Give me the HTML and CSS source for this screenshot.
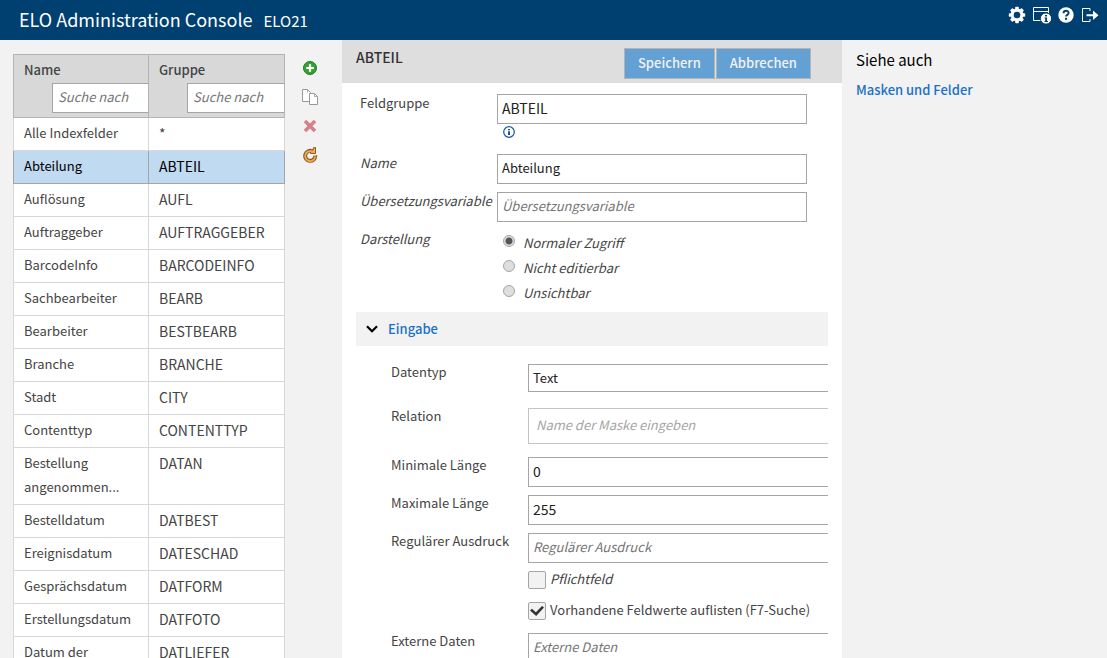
FILE: index.html
```html
<!DOCTYPE html>
<html lang="de">
<head>
<meta charset="utf-8">
<title>ELO Administration Console</title>
<link rel="stylesheet" href="styles.css">
</head>
<body>
<header class="topbar">
  <h1 class="brand">ELO Administration Console</h1>
  <span class="repo">ELO21</span>
  <nav class="top-actions">
    <button class="icon-btn" type="button" aria-label="Einstellungen">
      <svg width="18" height="18" viewBox="0 0 18 18"><g fill="#fff"><g id="t"><rect x="7.2" y="0.8" width="3.6" height="16.4" rx="0.8"/><rect x="0.8" y="7.2" width="16.4" height="3.6" rx="0.8"/></g><use href="#t" transform="rotate(45 9 9)"/><circle cx="9" cy="9" r="6.4"/></g><circle cx="9" cy="9" r="3.3" fill="#004071"/></svg>
    </button>
    <button class="icon-btn" type="button" aria-label="Informationen">
      <svg width="18" height="18" viewBox="0 0 18 18"><path d="M.5 1.500h15v13H.5zM.5 5.500h15" fill="none" stroke="#fff"/><circle cx="13" cy="12.500" r="5.600" fill="#fff" stroke="#004071"/><path d="M12 9h2v1.500h-2zM11.500 11.500H14v3.500h1v1h-3.500v-1h.7v-2.500h-.7z" fill="#004071"/></svg>
    </button>
    <button class="icon-btn" type="button" aria-label="Hilfe">
      <svg width="16" height="18" viewBox="0 0 16 18"><circle cx="8" cy="9" r="7.700" fill="#fff"/><path d="M5.500 7.200C5.500 4 10.600 4 10.600 7c0 2-2.600 1.800-2.600 3.600" fill="none" stroke="#004071" stroke-width="1.900"/><rect x="7" y="11.800" width="2" height="2" fill="#004071"/></svg>
    </button>
    <button class="icon-btn" type="button" aria-label="Abmelden">
      <svg width="18" height="18" viewBox="0 0 18 18"><path d="M9 5V2.500H1.500v13H9V13" fill="none" stroke="#fff"/><path d="M5.500 8.200H12V4.500L17.500 9.200 12 14v-3.700H5.500z" fill="#fff"/></svg>
    </button>
  </nav>
</header>

<div class="workspace">
  <section class="list">
    <table class="fields">
      <thead>
        <tr>
          <th><label for="sn">Name</label><span class="filter"><input id="sn" type="text" placeholder="Suche nach"></span></th>
          <th><label for="sg">Gruppe</label><span class="filter"><input id="sg" type="text" placeholder="Suche nach"></span></th>
        </tr>
      </thead>
      <tbody>
        <tr><td>Alle Indexfelder</td><td>*</td></tr>
        <tr class="selected"><td>Abteilung</td><td>ABTEIL</td></tr>
        <tr><td>Auflösung</td><td>AUFL</td></tr>
        <tr><td>Auftraggeber</td><td>AUFTRAGGEBER</td></tr>
        <tr><td>BarcodeInfo</td><td>BARCODEINFO</td></tr>
        <tr><td>Sachbearbeiter</td><td>BEARB</td></tr>
        <tr><td>Bearbeiter</td><td>BESTBEARB</td></tr>
        <tr><td>Branche</td><td>BRANCHE</td></tr>
        <tr><td>Stadt</td><td>CITY</td></tr>
        <tr><td>Contenttyp</td><td>CONTENTTYP</td></tr>
        <tr><td>Bestellung angenommen...</td><td>DATAN</td></tr>
        <tr><td>Bestelldatum</td><td>DATBEST</td></tr>
        <tr><td>Ereignisdatum</td><td>DATESCHAD</td></tr>
        <tr><td>Gesprächsdatum</td><td>DATFORM</td></tr>
        <tr><td>Erstellungsdatum</td><td>DATFOTO</td></tr>
        <tr><td>Datum der</td><td>DATLIEFER</td></tr>
      </tbody>
    </table>
  </section>

  <div class="tools">
    <button class="icon-btn" type="button" aria-label="Neu">
      <svg width="16" height="16" viewBox="0 0 16 16"><circle cx="8" cy="8" r="6.500" fill="#35a035" stroke="#1c7a22"/><path d="M8 4.200v7.600M4.200 8h7.600" stroke="#fff" stroke-width="2.200"/></svg>
    </button>
    <button class="icon-btn" type="button" aria-label="Kopieren">
      <svg width="16" height="16" viewBox="0 0 16 16"><path d="M.5.500h5l3 3v9h-8z" fill="#fff" stroke="#999"/><path d="M7.500 4.500h5l3 3v8h-8z" fill="#fff" stroke="#999"/><path d="M12.500 4.500v3h3M5.500.500v3" fill="none" stroke="#aaa"/></svg>
    </button>
    <button class="icon-btn" type="button" aria-label="Löschen">
      <svg width="16" height="16" viewBox="0 0 16 16"><path d="M3 3l10 10M13 3L3 13" stroke="#d68089" stroke-width="3.600"/></svg>
    </button>
    <button class="icon-btn" type="button" aria-label="Aktualisieren">
      <svg width="16" height="16" viewBox="0 0 16 16"><path d="M10.500 4.400A5 5 0 1 0 13.200 8.500" fill="none" stroke="#8d5a2a" stroke-width="4"/><path d="M8.500 6.500h5V.600h-2L11 3H8.500z" fill="#f0ab4c" stroke="#8d5a2a"/><path d="M10 4.400A5 5 0 1 0 13.200 9.300" fill="none" stroke="#f0ab4c" stroke-width="1.800"/></svg>
    </button>
  </div>

  <main class="panel">
    <div class="panel-head">
      <h2 class="panel-title">ABTEIL</h2>
      <div class="actions"><button class="btn" type="button">Speichern</button><button class="btn" type="button">Abbrechen</button></div>
    </div>
    <form class="form">
      <div class="row row-info">
        <label for="grp">Feldgruppe</label>
        <div class="control">
          <input id="grp" class="text code" type="text" value="ABTEIL">
          <svg class="info" width="12" height="12" viewBox="0 0 12 12"><circle cx="6" cy="6" r="5.300" fill="#fff" stroke="#1d5796" stroke-width="1.200"/><path d="M5 3h2v1.300H5zM5 5.200h2V9H5z" fill="#1d5796"/></svg>
        </div>
      </div>
      <div class="row tr"><label for="nm">Name</label><input id="nm" class="text" type="text" value="Abteilung"></div>
      <div class="row tr"><label for="uv">Übersetzungsvariable</label><input id="uv" class="text" type="text" placeholder="Übersetzungsvariable"></div>
      <div class="row tr" role="radiogroup" aria-labelledby="dl">
        <span class="caption" id="dl">Darstellung</span>
        <div class="radios">
          <label class="option"><input type="radio" name="d" checked><span>Normaler Zugriff</span></label>
          <label class="option"><input type="radio" name="d"><span>Nicht editierbar</span></label>
          <label class="option"><input type="radio" name="d"><span>Unsichtbar</span></label>
        </div>
      </div>
    </form>
    <section class="group">
      <button class="group-head" type="button">
        <svg width="12" height="8" viewBox="0 0 12 8"><path d="M1 1.200l5 5 5-5" fill="none" stroke="#000" stroke-width="2.200"/></svg>
        Eingabe
      </button>
      <div class="group-body">
        <div class="row row-type"><label for="dt">Datentyp</label><select id="dt" class="text select"><option>Text</option></select></div>
        <div class="row row-mask"><label for="rl">Relation</label><input id="rl" class="text mask" type="text" placeholder="Name der Maske eingeben"></div>
        <div class="row"><label for="mi">Minimale Länge</label><input id="mi" class="text code" type="text" value="0"></div>
        <div class="row"><label for="ma">Maximale Länge</label><input id="ma" class="text code" type="text" value="255"></div>
        <div class="row"><label for="ra">Regulärer Ausdruck</label><input id="ra" class="text" type="text" placeholder="Regulärer Ausdruck"></div>
        <label class="check tr"><input type="checkbox"><span>Pflichtfeld</span></label>
        <label class="check"><input type="checkbox" checked><span>Vorhandene Feldwerte auflisten (F7-Suche)</span></label>
        <div class="row"><label for="ed">Externe Daten</label><input id="ed" class="text" type="text" placeholder="Externe Daten"></div>
      </div>
    </section>
  </main>

  <aside class="aside">
    <h2 class="aside-title">Siehe auch</h2>
    <a class="link" href="#masken">Masken und Felder</a>
  </aside>
</div>
</body>
</html>
```
FILE: styles.css
```css
* { box-sizing: border-box; }
body {
  margin: 0;
  height: 100vh;
  display: flex;
  flex-direction: column;
  overflow: hidden;
  background: #f2f2f2;
  color: #444;
  font: 13px/24px "Noto Sans CJK SC", sans-serif;
}
button, input, select { font: inherit; color: inherit; margin: 0; }
h1, h2 { margin: 0; font-weight: 400; }
svg { display: block; }
.icon-btn { padding: 0; border: 0; background: none; cursor: pointer; }

.topbar {
  flex: none;
  display: flex;
  align-items: baseline;
  height: 40px;
  padding: 0 8px 0 19px;
  background: #004071;
  color: #fff;
  line-height: 38px;
}
.brand { font-size: 18px; }
.repo { margin-left: 11px; font-size: 15px; }
.top-actions { display: flex; gap: 7px; margin-left: auto; align-self: flex-start; padding-top: 6px; }

.workspace {
  flex: 1;
  min-height: 0;
  display: grid;
  grid-template-columns: 272px 57px minmax(0, 500fr) minmax(0, 265fr);
  padding-left: 13px;
}
.list { padding-top: 14px; min-height: 0; overflow: hidden; }
.fields { width: 100%; table-layout: fixed; border-spacing: 0; border-top: 1px solid #b4b4b4; }
.fields th, .fields td { text-align: left; vertical-align: top; border: 0 solid #d8d8d8; border-width: 0 1px 1px 0; }
.fields th:first-child, .fields td:first-child { border-left-width: 1px; }
.fields th { padding: 3px 0 4px; background: #d8d8d8; border-color: #b4b4b4; font-weight: 500; }
.fields th label { display: block; padding: 0 0 1px 10px; }
.fields td { padding: 3px 10px 5px; background: #fff; }
.fields td:last-child { font-size: 14px; }
.fields .selected td { background: #c0daf1; color: #000; border-color: #a5a5a5; }
.filter { display: block; margin-left: 38px; overflow: hidden; font-weight: 400; }
.filter input {
  display: block;
  width: 140px;
  height: 30px;
  padding: 0 5px 3px;
  border: 1px solid #a5a5a5;
  background: #fff;
}
::placeholder { color: #757575; font-style: italic; opacity: 1; }

.tools { display: flex; flex-direction: column; align-items: center; gap: 13px; padding: 20px 7px 0 0; }

.panel { min-height: 0; overflow: hidden; background: #fff; }
.panel-head {
  display: flex;
  justify-content: space-between;
  align-items: flex-start;
  height: 43px;
  padding: 8px 31px 0 14px;
  background: #dedede;
}
.panel-title { font-size: 14px; font-weight: 500; line-height: 18px; color: #333; }
.actions { display: flex; gap: 1px; }
.btn {
  height: 31px;
  padding: 0 13px 1px;
  border: 1px solid #b4b4b4;
  background: #63a0d4;
  color: #f2f2f2;
  font-weight: 500;
  line-height: 28px;
}
.form { padding: 11px 19px 7px 18px; }
.row { display: flex; align-items: flex-start; margin-bottom: 8px; }
.row > label, .caption { flex: none; width: 137px; line-height: 18px; white-space: nowrap; }
.tr > label, .caption, .tr span { font-style: italic; }
.text {
  flex: none;
  display: block;
  width: 310px;
  height: 30px;
  padding: 0 4px 3px;
  border: 1px solid #a5a5a5;
  border-radius: 0;
  background: #fff;
  color: #222;
}
.code { font-size: 14px; }
.row-info { margin-bottom: 16px; }
.info { margin: 2px 0 0 6px; }
.form .row:last-child { margin-bottom: 0; }
.radios { padding-left: 6px; }
.option { display: flex; gap: 8px; height: 25px; line-height: 25px; }
.option input {
  appearance: none;
  width: 12px;
  height: 12px;
  margin-top: 5px;
  border: 1px solid #a5a5a5;
  border-radius: 50%;
  background: #dedede;
}
.option input:checked { background: radial-gradient(circle, #555 0 3px, #dedede 4px); }

.group { margin: 0 14px; overflow: hidden; }
.group-head {
  display: flex;
  align-items: center;
  gap: 10px;
  width: 100%;
  height: 34px;
  padding: 0 10px;
  border: 0;
  background: #f2f2f2;
  color: #1a71c6;
  font-weight: 500;
  text-align: left;
}
.group-body { padding: 18px 0 0 35px; }
.group-body .row > label { line-height: 16px; }
.group-body .row-type { margin-bottom: 16px; }
.select { appearance: none; height: 28px; padding-bottom: 1px; }
.group-body .row-mask { margin-bottom: 13px; }
.mask { height: 36px; padding: 0 7px 3px; border-color: #c4c4c4; }
.mask::placeholder { color: #a5a5a5; }
.check { display: flex; align-items: center; gap: 4px; height: 18px; margin: 0 0 13px 137px; white-space: nowrap; }
.check span { padding-bottom: 2px; }
.check input {
  appearance: none;
  flex: none;
  display: grid;
  place-items: center;
  width: 18px;
  height: 18px;
  border: 1px solid #a5a5a5;
  border-radius: 2px;
  background: #f2f2f2;
}
.check input:checked::before {
  content: "";
  width: 14px;
  height: 10px;
  background: #333;
  clip-path: polygon(0 45%, 14% 28%, 42% 62%, 86% 0, 100% 16%, 44% 100%);
}

.aside { padding: 8px 14px; color: #000; }
.aside-title { font-size: 15px; line-height: 24px; margin-bottom: 6px; }
.link { color: #1a71c6; font-weight: 500; text-decoration: none; }
```
